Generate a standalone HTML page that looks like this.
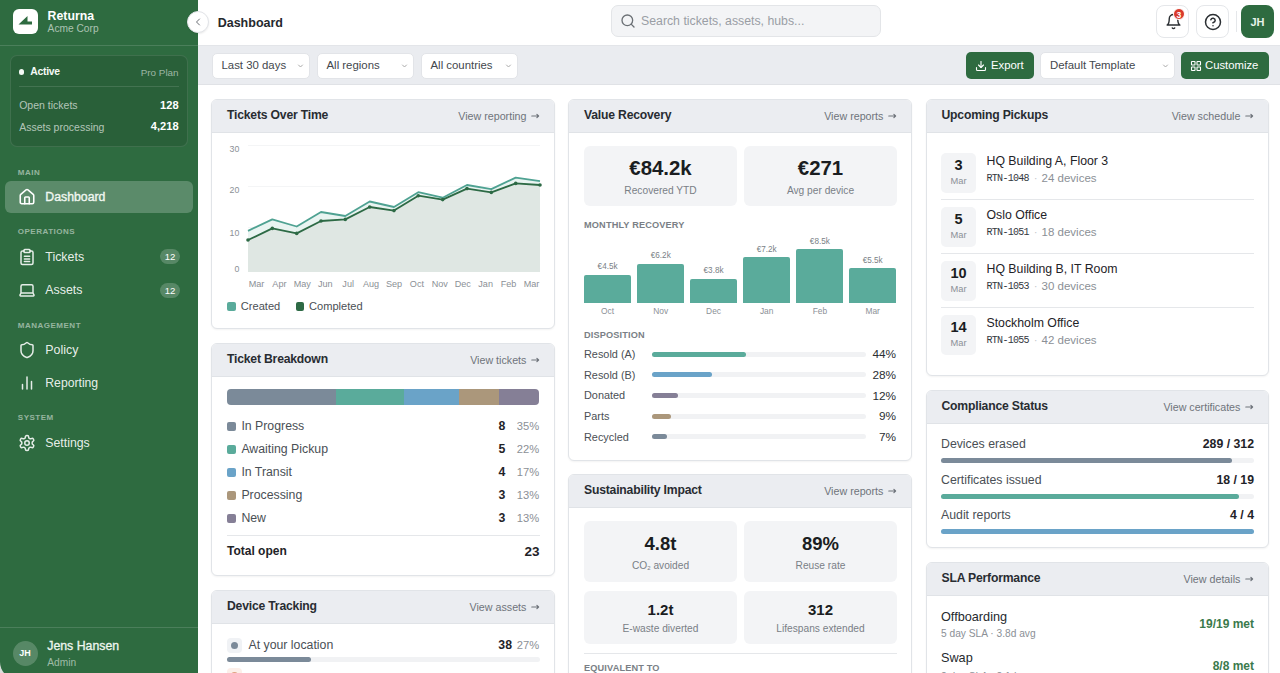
<!DOCTYPE html>
<html><head><meta charset="utf-8"><title>Dashboard</title>
<style>
html,body{margin:0;padding:0;}
body{width:1280px;height:673px;overflow:hidden;position:relative;background:#fff;font-family:"Liberation Sans",sans-serif;}
.t{position:absolute;white-space:nowrap;line-height:normal;}
.r{position:absolute;box-sizing:border-box;}
svg{position:absolute;overflow:visible;}
</style></head><body>
<div class="r" style="left:0px;top:640px;width:40px;height:33px;background:#dcdedc;"></div>
<div class="r" style="left:0px;top:0px;width:198px;height:679px;background:#2e6b40;border-bottom-left-radius:17px;"></div>
<div class="r" style="left:13px;top:9px;width:25px;height:25px;background:#fff;border-radius:6px;"></div>
<svg style="left:13px;top:9px" width="25" height="25" viewBox="0 0 25 25"><path d="M5.5 15.5 L14.5 7 L14.5 12.5 L19 12.5 L19 15.5 Z" fill="#2e6b40"/></svg>
<div class="t" style="top:8.57px;font-size:12.3px;font-weight:700;color:#fff;font-family:'Liberation Sans', sans-serif;left:47.6px;">Returna</div>
<div class="t" style="top:23.07px;font-size:10.2px;font-weight:400;color:rgba(255,255,255,0.6);font-family:'Liberation Sans', sans-serif;left:47.6px;">Acme Corp</div>
<div class="r" style="left:0px;top:45px;width:198px;height:1px;background:rgba(255,255,255,0.14);"></div>
<div class="r" style="left:10px;top:55px;width:178px;height:92px;background:rgba(0,0,0,0.1);border:1px solid rgba(255,255,255,0.1);border-radius:7px;"></div>
<div class="r" style="left:19px;top:69.2px;width:5.4px;height:5.4px;background:#f4faf5;border-radius:50%;"></div>
<div class="t" style="top:66.19px;font-size:10.4px;font-weight:700;color:#f4faf5;font-family:'Liberation Sans', sans-serif;letter-spacing:-0.25px;left:30.2px;">Active</div>
<div class="t" style="top:66.84px;font-size:9.9px;font-weight:400;color:rgba(255,255,255,0.55);font-family:'Liberation Sans', sans-serif;right:1101.4px;">Pro Plan</div>
<div class="r" style="left:19px;top:86px;width:160px;height:1px;background:rgba(255,255,255,0.12);"></div>
<div class="t" style="top:99.10px;font-size:10.5px;font-weight:400;color:rgba(255,255,255,0.65);font-family:'Liberation Sans', sans-serif;left:19.2px;">Open tickets</div>
<div class="t" style="top:98.55px;font-size:11.1px;font-weight:700;color:#fff;font-family:'Liberation Sans', sans-serif;right:1101.4px;">128</div>
<div class="t" style="top:120.50px;font-size:10.5px;font-weight:400;color:rgba(255,255,255,0.65);font-family:'Liberation Sans', sans-serif;left:19.2px;">Assets processing</div>
<div class="t" style="top:119.95px;font-size:11.1px;font-weight:700;color:#fff;font-family:'Liberation Sans', sans-serif;right:1101.4px;">4,218</div>
<div class="t" style="top:167.76px;font-size:8px;font-weight:700;color:rgba(255,255,255,0.5);font-family:'Liberation Sans', sans-serif;letter-spacing:0.5px;left:17.8px;">MAIN</div>
<div class="r" style="left:5px;top:181px;width:187.5px;height:32px;background:rgba(255,255,255,0.22);border-radius:6px;"></div>
<div class="t" style="top:190.07px;font-size:12.3px;font-weight:400;color:#f0f7f1;font-family:'Liberation Sans', sans-serif;left:45.3px;-webkit-text-stroke:0.35px #f0f7f1;">Dashboard</div>
<div class="t" style="top:226.76px;font-size:8px;font-weight:700;color:rgba(255,255,255,0.5);font-family:'Liberation Sans', sans-serif;letter-spacing:0.5px;left:17.8px;">OPERATIONS</div>
<div class="t" style="top:250.18px;font-size:12.4px;font-weight:400;color:rgba(255,255,255,0.9);font-family:'Liberation Sans', sans-serif;left:45.3px;">Tickets</div>
<div class="r" style="left:160px;top:249px;width:20px;height:15px;background:rgba(255,255,255,0.2);border-radius:7.5px;"></div>
<div class="t" style="top:251.21px;font-size:9.6px;font-weight:400;color:#fff;font-family:'Liberation Sans', sans-serif;left:-130px;width:600px;text-align:center;">12</div>
<div class="t" style="top:283.18px;font-size:12.4px;font-weight:400;color:rgba(255,255,255,0.9);font-family:'Liberation Sans', sans-serif;left:45.3px;">Assets</div>
<div class="r" style="left:160px;top:283px;width:20px;height:15px;background:rgba(255,255,255,0.2);border-radius:7.5px;"></div>
<div class="t" style="top:285.21px;font-size:9.6px;font-weight:400;color:#fff;font-family:'Liberation Sans', sans-serif;left:-130px;width:600px;text-align:center;">12</div>
<div class="t" style="top:320.56px;font-size:8px;font-weight:700;color:rgba(255,255,255,0.5);font-family:'Liberation Sans', sans-serif;letter-spacing:0.5px;left:17.8px;">MANAGEMENT</div>
<div class="t" style="top:342.98px;font-size:12.4px;font-weight:400;color:rgba(255,255,255,0.9);font-family:'Liberation Sans', sans-serif;left:45.3px;">Policy</div>
<div class="t" style="top:375.96px;font-size:12.2px;font-weight:400;color:rgba(255,255,255,0.9);font-family:'Liberation Sans', sans-serif;left:45.3px;">Reporting</div>
<div class="t" style="top:413.06px;font-size:8px;font-weight:700;color:rgba(255,255,255,0.5);font-family:'Liberation Sans', sans-serif;letter-spacing:0.5px;left:17.8px;">SYSTEM</div>
<div class="t" style="top:436.07px;font-size:12.3px;font-weight:400;color:rgba(255,255,255,0.9);font-family:'Liberation Sans', sans-serif;left:45.3px;">Settings</div>
<svg style="left:18px;top:188px" width="18" height="18" viewBox="0 0 24 24" fill="none" stroke="#fff" stroke-width="2.1" stroke-linecap="round" stroke-linejoin="round"><path d="M15 21v-8a1 1 0 0 0-1-1h-4a1 1 0 0 0-1 1v8"/><path d="M3 10a2 2 0 0 1 .709-1.528l7-5.999a2 2 0 0 1 2.582 0l7 5.999A2 2 0 0 1 21 10v9a2 2 0 0 1-2 2H5a2 2 0 0 1-2-2z"/></svg>
<svg style="left:18px;top:248px" width="18" height="18" viewBox="0 0 24 24" fill="none" stroke="rgba(255,255,255,0.88)" stroke-width="2" stroke-linecap="round" stroke-linejoin="round"><rect x="8" y="2" width="8" height="4" rx="1"/><path d="M16 4h2a2 2 0 0 1 2 2v14a2 2 0 0 1-2 2H6a2 2 0 0 1-2-2V6a2 2 0 0 1 2-2h2"/><path d="M8.5 11h7M8.5 14.5h7M8.5 18h7"/></svg>
<svg style="left:18px;top:281px" width="18" height="18" viewBox="0 0 24 24" fill="none" stroke="rgba(255,255,255,0.88)" stroke-width="2" stroke-linecap="round" stroke-linejoin="round"><path d="M20 16V7a2 2 0 0 0-2-2H6a2 2 0 0 0-2 2v9m16 0H4m16 0 1.28 2.55a1 1 0 0 1-.9 1.45H3.62a1 1 0 0 1-.9-1.45L4 16"/></svg>
<svg style="left:18px;top:341px" width="18" height="18" viewBox="0 0 24 24" fill="none" stroke="rgba(255,255,255,0.88)" stroke-width="2" stroke-linecap="round" stroke-linejoin="round"><path d="M20 13c0 5-3.5 7.5-7.66 8.95a1 1 0 0 1-.67-.01C7.5 20.5 4 18 4 13V6a1 1 0 0 1 1-1c2 0 4.5-1.2 6.24-2.72a1.17 1.17 0 0 1 1.52 0C14.51 3.81 17 5 19 5a1 1 0 0 1 1 1z"/></svg>
<svg style="left:18px;top:374px" width="18" height="18" viewBox="0 0 24 24" fill="none" stroke="rgba(255,255,255,0.88)" stroke-width="2" stroke-linecap="round" stroke-linejoin="round"><path d="M18 20V10M12 20V4M6 20v-6"/></svg>
<svg style="left:18px;top:434px" width="18" height="18" viewBox="0 0 24 24" fill="none" stroke="rgba(255,255,255,0.88)" stroke-width="2" stroke-linecap="round" stroke-linejoin="round"><path d="M12.22 2h-.44a2 2 0 0 0-2 2v.18a2 2 0 0 1-1 1.73l-.43.25a2 2 0 0 1-2 0l-.15-.08a2 2 0 0 0-2.73.73l-.22.38a2 2 0 0 0 .73 2.73l.15.1a2 2 0 0 1 1 1.72v.51a2 2 0 0 1-1 1.74l-.15.09a2 2 0 0 0-.73 2.73l.22.38a2 2 0 0 0 2.73.73l.15-.08a2 2 0 0 1 2 0l.43.25a2 2 0 0 1 1 1.73V20a2 2 0 0 0 2 2h.44a2 2 0 0 0 2-2v-.18a2 2 0 0 1 1-1.73l.43-.25a2 2 0 0 1 2 0l.15.08a2 2 0 0 0 2.73-.73l.22-.39a2 2 0 0 0-.73-2.73l-.15-.08a2 2 0 0 1-1-1.74v-.5a2 2 0 0 1 1-1.74l.15-.09a2 2 0 0 0 .73-2.73l-.22-.38a2 2 0 0 0-2.73-.73l-.15.08a2 2 0 0 1-2 0l-.43-.25a2 2 0 0 1-1-1.73V4a2 2 0 0 0-2-2z"/><circle cx="12" cy="12" r="3"/></svg>
<div class="r" style="left:0px;top:627px;width:198px;height:1px;background:rgba(255,255,255,0.14);"></div>
<div class="r" style="left:12.5px;top:640.5px;width:25px;height:25px;background:rgba(255,255,255,0.2);border-radius:50%;"></div>
<div class="t" style="top:648.36px;font-size:9px;font-weight:700;color:#fff;font-family:'Liberation Sans', sans-serif;left:-275px;width:600px;text-align:center;">JH</div>
<div class="t" style="top:638.77px;font-size:12.3px;font-weight:400;color:#eef6ef;font-family:'Liberation Sans', sans-serif;left:47.3px;-webkit-text-stroke:0.3px #eef6ef;">Jens Hansen</div>
<div class="t" style="top:657.27px;font-size:10.2px;font-weight:400;color:rgba(255,255,255,0.55);font-family:'Liberation Sans', sans-serif;left:47.3px;">Admin</div>
<div class="r" style="left:198px;top:45px;width:1082px;height:1px;background:#e3e5e9;"></div>
<div class="t" style="top:15.59px;font-size:12.5px;font-weight:700;color:#25292e;font-family:'Liberation Sans', sans-serif;left:217.7px;">Dashboard</div>
<div class="r" style="left:187px;top:10.5px;width:22px;height:22px;background:#fff;border:1px solid #e2e4e8;border-radius:50%;box-shadow:0 1px 2px rgba(0,0,0,0.08);"></div>
<svg style="left:192px;top:15.5px" width="12" height="12" viewBox="0 0 24 24" fill="none" stroke="#6a6e74" stroke-width="2" stroke-linecap="round" stroke-linejoin="round"><path d="m15 18-6-6 6-6"/></svg>
<div class="r" style="left:611px;top:5px;width:270px;height:32px;background:#f3f4f6;border:1px solid #e3e5e8;border-radius:7px;"></div>
<svg style="left:619.5px;top:13px" width="16" height="16" viewBox="0 0 24 24" fill="none" stroke="#6b7075" stroke-width="2" stroke-linecap="round" stroke-linejoin="round"><circle cx="11" cy="11" r="8"/><path d="m21 21-4.3-4.3"/></svg>
<div class="t" style="top:14.37px;font-size:12.3px;font-weight:400;color:#9a9ea5;font-family:'Liberation Sans', sans-serif;left:641px;">Search tickets, assets, hubs...</div>
<div class="r" style="left:1156px;top:5px;width:33px;height:33px;background:#fff;border:1px solid #e5e7ea;border-radius:8px;"></div>
<svg style="left:1164.5px;top:13px" width="17" height="17" viewBox="0 0 24 24" fill="none" stroke="#2b2f33" stroke-width="2" stroke-linecap="round" stroke-linejoin="round"><path d="M6 8a6 6 0 0 1 12 0c0 7 3 9 3 9H3s3-2 3-9"/><path d="M10.3 21a1.94 1.94 0 0 0 3.4 0"/></svg>
<div class="r" style="left:1172.8px;top:8.2px;width:12px;height:12px;background:#d93a2b;border-radius:50%;border:1px solid #fff;"></div>
<div class="t" style="top:9.81px;font-size:8.5px;font-weight:700;color:#fff;font-family:'Liberation Sans', sans-serif;left:878.8px;width:600px;text-align:center;">3</div>
<div class="r" style="left:1196px;top:5px;width:33px;height:33px;background:#fff;border:1px solid #e5e7ea;border-radius:8px;"></div>
<svg style="left:1203.5px;top:12.5px" width="18" height="18" viewBox="0 0 24 24" fill="none" stroke="#2b2f33" stroke-width="2" stroke-linecap="round" stroke-linejoin="round"><circle cx="12" cy="12" r="10"/><path d="M9.09 9a3 3 0 0 1 5.83 1c0 2-3 3-3 3"/><path d="M12 17h.01"/></svg>
<div class="r" style="left:1235.5px;top:11px;width:1px;height:21px;background:#e5e7ea;"></div>
<div class="r" style="left:1241px;top:5px;width:33px;height:33px;background:#2e6b40;border-radius:8px;"></div>
<div class="t" style="top:15.54px;font-size:11px;font-weight:700;color:#e8f3ea;font-family:'Liberation Sans', sans-serif;left:957.5px;width:600px;text-align:center;">JH</div>
<div class="r" style="left:198px;top:46px;width:1082px;height:39px;background:#eaecf0;border-bottom:1px solid #e0e2e6;"></div>
<div class="r" style="left:212px;top:53px;width:98px;height:26px;background:#fff;border:1px solid #e2e4e8;border-radius:5px;"></div>
<div class="t" style="top:59.48px;font-size:11.4px;font-weight:400;color:#43474d;font-family:'Liberation Sans', sans-serif;left:221.5px;">Last 30 days</div>
<svg style="left:297px;top:63px" width="7" height="6" viewBox="0 0 7 6" fill="none" stroke="#aaa" stroke-width="1" stroke-linecap="round"><path d="M1.5 2L3.5 4L5.5 2"/></svg>
<div class="r" style="left:317px;top:53px;width:97px;height:26px;background:#fff;border:1px solid #e2e4e8;border-radius:5px;"></div>
<div class="t" style="top:59.48px;font-size:11.4px;font-weight:400;color:#43474d;font-family:'Liberation Sans', sans-serif;left:326.5px;">All regions</div>
<svg style="left:401px;top:63px" width="7" height="6" viewBox="0 0 7 6" fill="none" stroke="#aaa" stroke-width="1" stroke-linecap="round"><path d="M1.5 2L3.5 4L5.5 2"/></svg>
<div class="r" style="left:421px;top:53px;width:97px;height:26px;background:#fff;border:1px solid #e2e4e8;border-radius:5px;"></div>
<div class="t" style="top:59.48px;font-size:11.4px;font-weight:400;color:#43474d;font-family:'Liberation Sans', sans-serif;left:430.5px;">All countries</div>
<svg style="left:505px;top:63px" width="7" height="6" viewBox="0 0 7 6" fill="none" stroke="#aaa" stroke-width="1" stroke-linecap="round"><path d="M1.5 2L3.5 4L5.5 2"/></svg>
<div class="r" style="left:966px;top:52px;width:68px;height:27px;background:#2e6b40;border-radius:5px;"></div>
<svg style="left:975px;top:59.5px" width="12" height="12" viewBox="0 0 24 24" fill="none" stroke="#fff" stroke-width="2.2" stroke-linecap="round" stroke-linejoin="round"><path d="M21 15v4a2 2 0 0 1-2 2H5a2 2 0 0 1-2-2v-4"/><path d="m7 10 5 5 5-5"/><path d="M12 15V3"/></svg>
<div class="t" style="top:59.37px;font-size:11.3px;font-weight:400;color:#fff;font-family:'Liberation Sans', sans-serif;left:991px;">Export</div>
<div class="r" style="left:1040px;top:52px;width:135px;height:27px;background:#fff;border:1px solid #e2e4e8;border-radius:5px;"></div>
<div class="t" style="top:59.28px;font-size:11.4px;font-weight:400;color:#43474d;font-family:'Liberation Sans', sans-serif;left:1050px;">Default Template</div>
<svg style="left:1162px;top:63px" width="7" height="6" viewBox="0 0 7 6" fill="none" stroke="#aaa" stroke-width="1" stroke-linecap="round"><path d="M1.5 2L3.5 4L5.5 2"/></svg>
<div class="r" style="left:1181px;top:52px;width:88px;height:27px;background:#2e6b40;border-radius:5px;"></div>
<svg style="left:1190px;top:59.5px" width="12" height="12" viewBox="0 0 24 24" fill="none" stroke="#fff" stroke-width="2.2" stroke-linecap="round" stroke-linejoin="round"><rect width="7" height="7" x="3" y="3" rx="1"/><rect width="7" height="7" x="14" y="3" rx="1"/><rect width="7" height="7" x="14" y="14" rx="1"/><rect width="7" height="7" x="3" y="14" rx="1"/></svg>
<div class="t" style="top:59.37px;font-size:11.3px;font-weight:400;color:#fff;font-family:'Liberation Sans', sans-serif;left:1205px;">Customize</div>
<div class="r" style="left:211px;top:99px;width:344px;height:230px;background:#fff;border:1px solid #e1e4e8;border-radius:6px;box-shadow:0 1px 2px rgba(0,0,0,0.05);overflow:hidden;"></div>
<div class="r" style="left:212px;top:100px;width:342px;height:33px;background:#ebedf1;border-bottom:1px solid #e0e3e7;border-radius:5px 5px 0 0;"></div>
<div class="t" style="top:108.36px;font-size:12.2px;font-weight:700;color:#282c31;font-family:'Liberation Sans', sans-serif;letter-spacing:-0.2px;left:227px;">Tickets Over Time</div>
<div class="t" style="top:109.82px;font-size:10.7px;font-weight:400;color:#6f747b;font-family:'Liberation Sans', sans-serif;right:753.6px;">View reporting</div>
<svg style="left:531px;top:112.5px" width="9" height="6" viewBox="0 0 9 6" fill="none" stroke="#6f747b" stroke-width="1.2" stroke-linecap="round" stroke-linejoin="round"><path d="M0.8 3H7.6M5.9 1.3L7.6 3L5.9 4.7"/></svg>
<div class="r" style="left:211px;top:343px;width:344px;height:233px;background:#fff;border:1px solid #e1e4e8;border-radius:6px;box-shadow:0 1px 2px rgba(0,0,0,0.05);overflow:hidden;"></div>
<div class="r" style="left:212px;top:344px;width:342px;height:33px;background:#ebedf1;border-bottom:1px solid #e0e3e7;border-radius:5px 5px 0 0;"></div>
<div class="t" style="top:352.36px;font-size:12.2px;font-weight:700;color:#282c31;font-family:'Liberation Sans', sans-serif;letter-spacing:-0.2px;left:227px;">Ticket Breakdown</div>
<div class="t" style="top:353.82px;font-size:10.7px;font-weight:400;color:#6f747b;font-family:'Liberation Sans', sans-serif;right:753.6px;">View tickets</div>
<svg style="left:531px;top:356.5px" width="9" height="6" viewBox="0 0 9 6" fill="none" stroke="#6f747b" stroke-width="1.2" stroke-linecap="round" stroke-linejoin="round"><path d="M0.8 3H7.6M5.9 1.3L7.6 3L5.9 4.7"/></svg>
<div class="r" style="left:211px;top:590px;width:344px;height:110px;background:#fff;border:1px solid #e1e4e8;border-radius:6px;box-shadow:0 1px 2px rgba(0,0,0,0.05);overflow:hidden;"></div>
<div class="r" style="left:212px;top:591px;width:342px;height:33px;background:#ebedf1;border-bottom:1px solid #e0e3e7;border-radius:5px 5px 0 0;"></div>
<div class="t" style="top:599.36px;font-size:12.2px;font-weight:700;color:#282c31;font-family:'Liberation Sans', sans-serif;letter-spacing:-0.2px;left:227px;">Device Tracking</div>
<div class="t" style="top:600.82px;font-size:10.7px;font-weight:400;color:#6f747b;font-family:'Liberation Sans', sans-serif;right:753.6px;">View assets</div>
<svg style="left:531px;top:603.5px" width="9" height="6" viewBox="0 0 9 6" fill="none" stroke="#6f747b" stroke-width="1.2" stroke-linecap="round" stroke-linejoin="round"><path d="M0.8 3H7.6M5.9 1.3L7.6 3L5.9 4.7"/></svg>
<div class="r" style="left:568px;top:99px;width:344px;height:362px;background:#fff;border:1px solid #e1e4e8;border-radius:6px;box-shadow:0 1px 2px rgba(0,0,0,0.05);overflow:hidden;"></div>
<div class="r" style="left:569px;top:100px;width:342px;height:33px;background:#ebedf1;border-bottom:1px solid #e0e3e7;border-radius:5px 5px 0 0;"></div>
<div class="t" style="top:108.36px;font-size:12.2px;font-weight:700;color:#282c31;font-family:'Liberation Sans', sans-serif;letter-spacing:-0.2px;left:584px;">Value Recovery</div>
<div class="t" style="top:109.82px;font-size:10.7px;font-weight:400;color:#6f747b;font-family:'Liberation Sans', sans-serif;right:396.6px;">View reports</div>
<svg style="left:888px;top:112.5px" width="9" height="6" viewBox="0 0 9 6" fill="none" stroke="#6f747b" stroke-width="1.2" stroke-linecap="round" stroke-linejoin="round"><path d="M0.8 3H7.6M5.9 1.3L7.6 3L5.9 4.7"/></svg>
<div class="r" style="left:568px;top:474px;width:344px;height:226px;background:#fff;border:1px solid #e1e4e8;border-radius:6px;box-shadow:0 1px 2px rgba(0,0,0,0.05);overflow:hidden;"></div>
<div class="r" style="left:569px;top:475px;width:342px;height:33px;background:#ebedf1;border-bottom:1px solid #e0e3e7;border-radius:5px 5px 0 0;"></div>
<div class="t" style="top:483.36px;font-size:12.2px;font-weight:700;color:#282c31;font-family:'Liberation Sans', sans-serif;letter-spacing:-0.2px;left:584px;">Sustainability Impact</div>
<div class="t" style="top:484.82px;font-size:10.7px;font-weight:400;color:#6f747b;font-family:'Liberation Sans', sans-serif;right:396.6px;">View reports</div>
<svg style="left:888px;top:487.5px" width="9" height="6" viewBox="0 0 9 6" fill="none" stroke="#6f747b" stroke-width="1.2" stroke-linecap="round" stroke-linejoin="round"><path d="M0.8 3H7.6M5.9 1.3L7.6 3L5.9 4.7"/></svg>
<div class="r" style="left:925.5px;top:99px;width:343.5px;height:277px;background:#fff;border:1px solid #e1e4e8;border-radius:6px;box-shadow:0 1px 2px rgba(0,0,0,0.05);overflow:hidden;"></div>
<div class="r" style="left:926.5px;top:100px;width:341.5px;height:33px;background:#ebedf1;border-bottom:1px solid #e0e3e7;border-radius:5px 5px 0 0;"></div>
<div class="t" style="top:108.36px;font-size:12.2px;font-weight:700;color:#282c31;font-family:'Liberation Sans', sans-serif;letter-spacing:-0.2px;left:941.5px;">Upcoming Pickups</div>
<div class="t" style="top:109.82px;font-size:10.7px;font-weight:400;color:#6f747b;font-family:'Liberation Sans', sans-serif;right:39.59999999999991px;">View schedule</div>
<svg style="left:1245.0px;top:112.5px" width="9" height="6" viewBox="0 0 9 6" fill="none" stroke="#6f747b" stroke-width="1.2" stroke-linecap="round" stroke-linejoin="round"><path d="M0.8 3H7.6M5.9 1.3L7.6 3L5.9 4.7"/></svg>
<div class="r" style="left:925.5px;top:390px;width:343.5px;height:158px;background:#fff;border:1px solid #e1e4e8;border-radius:6px;box-shadow:0 1px 2px rgba(0,0,0,0.05);overflow:hidden;"></div>
<div class="r" style="left:926.5px;top:391px;width:341.5px;height:33px;background:#ebedf1;border-bottom:1px solid #e0e3e7;border-radius:5px 5px 0 0;"></div>
<div class="t" style="top:399.36px;font-size:12.2px;font-weight:700;color:#282c31;font-family:'Liberation Sans', sans-serif;letter-spacing:-0.2px;left:941.5px;">Compliance Status</div>
<div class="t" style="top:400.82px;font-size:10.7px;font-weight:400;color:#6f747b;font-family:'Liberation Sans', sans-serif;right:39.59999999999991px;">View certificates</div>
<svg style="left:1245.0px;top:403.5px" width="9" height="6" viewBox="0 0 9 6" fill="none" stroke="#6f747b" stroke-width="1.2" stroke-linecap="round" stroke-linejoin="round"><path d="M0.8 3H7.6M5.9 1.3L7.6 3L5.9 4.7"/></svg>
<div class="r" style="left:925.5px;top:562px;width:343.5px;height:138px;background:#fff;border:1px solid #e1e4e8;border-radius:6px;box-shadow:0 1px 2px rgba(0,0,0,0.05);overflow:hidden;"></div>
<div class="r" style="left:926.5px;top:563px;width:341.5px;height:33px;background:#ebedf1;border-bottom:1px solid #e0e3e7;border-radius:5px 5px 0 0;"></div>
<div class="t" style="top:571.36px;font-size:12.2px;font-weight:700;color:#282c31;font-family:'Liberation Sans', sans-serif;letter-spacing:-0.2px;left:941.5px;">SLA Performance</div>
<div class="t" style="top:572.82px;font-size:10.7px;font-weight:400;color:#6f747b;font-family:'Liberation Sans', sans-serif;right:39.59999999999991px;">View details</div>
<svg style="left:1245.0px;top:575.5px" width="9" height="6" viewBox="0 0 9 6" fill="none" stroke="#6f747b" stroke-width="1.2" stroke-linecap="round" stroke-linejoin="round"><path d="M0.8 3H7.6M5.9 1.3L7.6 3L5.9 4.7"/></svg>
<div class="r" style="left:248px;top:145.4px;width:292px;height:1px;background:#f4f5f6;"></div>
<div class="r" style="left:248px;top:186.3px;width:292px;height:1px;background:#f4f5f6;"></div>
<div class="r" style="left:248px;top:227.2px;width:292px;height:1px;background:#f4f5f6;"></div>
<div class="t" style="top:143.64px;font-size:8.8px;font-weight:400;color:#8b9096;font-family:'Liberation Sans', sans-serif;right:1040.7px;">30</div>
<div class="t" style="top:185.44px;font-size:8.8px;font-weight:400;color:#8b9096;font-family:'Liberation Sans', sans-serif;right:1040.7px;">20</div>
<div class="t" style="top:227.84px;font-size:8.8px;font-weight:400;color:#8b9096;font-family:'Liberation Sans', sans-serif;right:1040.7px;">10</div>
<div class="t" style="top:264.24px;font-size:8.8px;font-weight:400;color:#8b9096;font-family:'Liberation Sans', sans-serif;right:1040.7px;">0</div>
<svg style="left:248px;top:140px" width="292" height="132" viewBox="0 0 292 132"><polygon points="0,132 0.0,90.9 24.3,79.4 48.7,86.5 73.0,72.0 97.3,76.0 121.7,61.5 146.0,67.0 170.3,52.2 194.7,57.7 219.0,45.0 243.3,49.1 267.7,37.6 292.0,41.2 292,132" fill="#e9f4f1"/><polygon points="0,132 0.0,100.0 24.3,88.4 48.7,93.4 73.0,81.0 97.3,79.4 121.7,67.0 146.0,70.6 170.3,55.7 194.7,59.6 219.0,48.6 243.3,52.4 267.7,43.4 292.0,45.0 292,132" fill="#dfe7e3"/><polyline points="0.0,90.9 24.3,79.4 48.7,86.5 73.0,72.0 97.3,76.0 121.7,61.5 146.0,67.0 170.3,52.2 194.7,57.7 219.0,45.0 243.3,49.1 267.7,37.6 292.0,41.2" fill="none" stroke="#4fa292" stroke-width="1.8" stroke-linejoin="round"/><polyline points="0.0,100.0 24.3,88.4 48.7,93.4 73.0,81.0 97.3,79.4 121.7,67.0 146.0,70.6 170.3,55.7 194.7,59.6 219.0,48.6 243.3,52.4 267.7,43.4 292.0,45.0" fill="none" stroke="#2d6a45" stroke-width="1.8" stroke-linejoin="round"/><circle cx="0.0" cy="100.0" r="1.8" fill="#2d6a45"/><circle cx="24.3" cy="88.4" r="1.8" fill="#2d6a45"/><circle cx="48.7" cy="93.4" r="1.8" fill="#2d6a45"/><circle cx="73.0" cy="81.0" r="1.8" fill="#2d6a45"/><circle cx="97.3" cy="79.4" r="1.8" fill="#2d6a45"/><circle cx="121.7" cy="67.0" r="1.8" fill="#2d6a45"/><circle cx="146.0" cy="70.6" r="1.8" fill="#2d6a45"/><circle cx="170.3" cy="55.7" r="1.8" fill="#2d6a45"/><circle cx="194.7" cy="59.6" r="1.8" fill="#2d6a45"/><circle cx="219.0" cy="48.6" r="1.8" fill="#2d6a45"/><circle cx="243.3" cy="52.4" r="1.8" fill="#2d6a45"/><circle cx="267.7" cy="43.4" r="1.8" fill="#2d6a45"/><circle cx="292.0" cy="45.0" r="1.8" fill="#2d6a45"/></svg>
<div class="t" style="top:278.76px;font-size:9.1px;font-weight:400;color:#8b9096;font-family:'Liberation Sans', sans-serif;left:-43.5px;width:600px;text-align:center;">Mar</div>
<div class="t" style="top:278.76px;font-size:9.1px;font-weight:400;color:#8b9096;font-family:'Liberation Sans', sans-serif;left:-20.583333333333314px;width:600px;text-align:center;">Apr</div>
<div class="t" style="top:278.76px;font-size:9.1px;font-weight:400;color:#8b9096;font-family:'Liberation Sans', sans-serif;left:2.3333333333333144px;width:600px;text-align:center;">May</div>
<div class="t" style="top:278.76px;font-size:9.1px;font-weight:400;color:#8b9096;font-family:'Liberation Sans', sans-serif;left:25.25px;width:600px;text-align:center;">Jun</div>
<div class="t" style="top:278.76px;font-size:9.1px;font-weight:400;color:#8b9096;font-family:'Liberation Sans', sans-serif;left:48.166666666666686px;width:600px;text-align:center;">Jul</div>
<div class="t" style="top:278.76px;font-size:9.1px;font-weight:400;color:#8b9096;font-family:'Liberation Sans', sans-serif;left:71.08333333333331px;width:600px;text-align:center;">Aug</div>
<div class="t" style="top:278.76px;font-size:9.1px;font-weight:400;color:#8b9096;font-family:'Liberation Sans', sans-serif;left:94.0px;width:600px;text-align:center;">Sep</div>
<div class="t" style="top:278.76px;font-size:9.1px;font-weight:400;color:#8b9096;font-family:'Liberation Sans', sans-serif;left:116.91666666666663px;width:600px;text-align:center;">Oct</div>
<div class="t" style="top:278.76px;font-size:9.1px;font-weight:400;color:#8b9096;font-family:'Liberation Sans', sans-serif;left:139.83333333333337px;width:600px;text-align:center;">Nov</div>
<div class="t" style="top:278.76px;font-size:9.1px;font-weight:400;color:#8b9096;font-family:'Liberation Sans', sans-serif;left:162.75px;width:600px;text-align:center;">Dec</div>
<div class="t" style="top:278.76px;font-size:9.1px;font-weight:400;color:#8b9096;font-family:'Liberation Sans', sans-serif;left:185.66666666666663px;width:600px;text-align:center;">Jan</div>
<div class="t" style="top:278.76px;font-size:9.1px;font-weight:400;color:#8b9096;font-family:'Liberation Sans', sans-serif;left:208.58333333333337px;width:600px;text-align:center;">Feb</div>
<div class="t" style="top:278.76px;font-size:9.1px;font-weight:400;color:#8b9096;font-family:'Liberation Sans', sans-serif;left:231.5px;width:600px;text-align:center;">Mar</div>
<div class="r" style="left:227px;top:302px;width:8.5px;height:8.5px;background:#5aab9b;border-radius:2px;"></div>
<div class="t" style="top:299.55px;font-size:11.1px;font-weight:400;color:#4a4f55;font-family:'Liberation Sans', sans-serif;left:240.8px;">Created</div>
<div class="r" style="left:295.5px;top:302px;width:8.5px;height:8.5px;background:#2d6a45;border-radius:2px;"></div>
<div class="t" style="top:299.55px;font-size:11.1px;font-weight:400;color:#4a4f55;font-family:'Liberation Sans', sans-serif;left:309px;">Completed</div>
<div class="r" style="left:227px;top:389px;width:312.2px;height:15.5px;border-radius:4px;overflow:hidden;"><div style="position:absolute;left:0px;width:108.89999999999998px;top:0;height:15.5px;background:#7b8a99"></div><div style="position:absolute;left:108.89999999999998px;width:68.20000000000005px;top:0;height:15.5px;background:#5aab9b"></div><div style="position:absolute;left:177.10000000000002px;width:55.0px;top:0;height:15.5px;background:#6aa3c8"></div><div style="position:absolute;left:232.10000000000002px;width:39.5px;top:0;height:15.5px;background:#ab977b"></div><div style="position:absolute;left:271.6px;width:40.60000000000002px;top:0;height:15.5px;background:#857f96"></div></div>
<div class="r" style="left:227px;top:421.8px;width:9px;height:9px;background:#7b8a99;border-radius:2px;"></div>
<div class="t" style="top:419.17px;font-size:12.3px;font-weight:400;color:#4a4f55;font-family:'Liberation Sans', sans-serif;left:241.4px;">In Progress</div>
<div class="t" style="top:419.17px;font-size:12.3px;font-weight:700;color:#1f2328;font-family:'Liberation Sans', sans-serif;right:774.6px;">8</div>
<div class="t" style="top:420.16px;font-size:11.2px;font-weight:400;color:#8b9096;font-family:'Liberation Sans', sans-serif;right:740.8px;">35%</div>
<div class="r" style="left:227px;top:444.75px;width:9px;height:9px;background:#5aab9b;border-radius:2px;"></div>
<div class="t" style="top:442.12px;font-size:12.3px;font-weight:400;color:#4a4f55;font-family:'Liberation Sans', sans-serif;left:241.4px;">Awaiting Pickup</div>
<div class="t" style="top:442.12px;font-size:12.3px;font-weight:700;color:#1f2328;font-family:'Liberation Sans', sans-serif;right:774.6px;">5</div>
<div class="t" style="top:443.11px;font-size:11.2px;font-weight:400;color:#8b9096;font-family:'Liberation Sans', sans-serif;right:740.8px;">22%</div>
<div class="r" style="left:227px;top:467.7px;width:9px;height:9px;background:#6aa3c8;border-radius:2px;"></div>
<div class="t" style="top:465.07px;font-size:12.3px;font-weight:400;color:#4a4f55;font-family:'Liberation Sans', sans-serif;left:241.4px;">In Transit</div>
<div class="t" style="top:465.07px;font-size:12.3px;font-weight:700;color:#1f2328;font-family:'Liberation Sans', sans-serif;right:774.6px;">4</div>
<div class="t" style="top:466.06px;font-size:11.2px;font-weight:400;color:#8b9096;font-family:'Liberation Sans', sans-serif;right:740.8px;">17%</div>
<div class="r" style="left:227px;top:490.65px;width:9px;height:9px;background:#ab977b;border-radius:2px;"></div>
<div class="t" style="top:488.02px;font-size:12.3px;font-weight:400;color:#4a4f55;font-family:'Liberation Sans', sans-serif;left:241.4px;">Processing</div>
<div class="t" style="top:488.02px;font-size:12.3px;font-weight:700;color:#1f2328;font-family:'Liberation Sans', sans-serif;right:774.6px;">3</div>
<div class="t" style="top:489.01px;font-size:11.2px;font-weight:400;color:#8b9096;font-family:'Liberation Sans', sans-serif;right:740.8px;">13%</div>
<div class="r" style="left:227px;top:513.6px;width:9px;height:9px;background:#857f96;border-radius:2px;"></div>
<div class="t" style="top:510.97px;font-size:12.3px;font-weight:400;color:#4a4f55;font-family:'Liberation Sans', sans-serif;left:241.4px;">New</div>
<div class="t" style="top:510.97px;font-size:12.3px;font-weight:700;color:#1f2328;font-family:'Liberation Sans', sans-serif;right:774.6px;">3</div>
<div class="t" style="top:511.96px;font-size:11.2px;font-weight:400;color:#8b9096;font-family:'Liberation Sans', sans-serif;right:740.8px;">13%</div>
<div class="r" style="left:227px;top:534.5px;width:313px;height:1px;background:#e5e7ea;"></div>
<div class="t" style="top:544.04px;font-size:12px;font-weight:700;color:#1f2328;font-family:'Liberation Sans', sans-serif;left:227px;">Total open</div>
<div class="t" style="top:544.48px;font-size:13.5px;font-weight:700;color:#1f2328;font-family:'Liberation Sans', sans-serif;right:740.5px;">23</div>
<div class="r" style="left:227px;top:637.5px;width:15px;height:15px;background:#f0f2f5;border-radius:4px;"></div>
<div class="r" style="left:231px;top:641.5px;width:7px;height:7px;background:#7b8a99;border-radius:50%;"></div>
<div class="t" style="top:637.67px;font-size:12.3px;font-weight:400;color:#4a4f55;font-family:'Liberation Sans', sans-serif;left:248.5px;">At your location</div>
<div class="t" style="top:637.67px;font-size:12.3px;font-weight:700;color:#1f2328;font-family:'Liberation Sans', sans-serif;right:768px;">38</div>
<div class="t" style="top:638.66px;font-size:11.2px;font-weight:400;color:#8b9096;font-family:'Liberation Sans', sans-serif;right:740.8px;">27%</div>
<div class="r" style="left:227px;top:657px;width:313px;height:4.5px;background:#f1f2f4;border-radius:3px;"></div>
<div class="r" style="left:227px;top:657px;width:84px;height:4.5px;background:#7b8a99;border-radius:3px;"></div>
<div class="r" style="left:227px;top:668px;width:15px;height:15px;background:#fcefe9;border-radius:4px;"></div>
<div class="r" style="left:231px;top:672px;width:7px;height:7px;background:#e0a080;border-radius:50%;"></div>
<div class="r" style="left:584px;top:146px;width:153px;height:60px;background:#f3f4f6;border-radius:6px;"></div>
<div class="t" style="top:156.74px;font-size:20.4px;font-weight:700;color:#1a1d21;font-family:'Liberation Sans', sans-serif;left:360.5px;width:600px;text-align:center;">&euro;84.2k</div>
<div class="t" style="top:185.37px;font-size:10.2px;font-weight:400;color:#7a7f86;font-family:'Liberation Sans', sans-serif;left:360.5px;width:600px;text-align:center;">Recovered YTD</div>
<div class="r" style="left:744px;top:146px;width:153px;height:60px;background:#f3f4f6;border-radius:6px;"></div>
<div class="t" style="top:156.74px;font-size:20.4px;font-weight:700;color:#1a1d21;font-family:'Liberation Sans', sans-serif;left:520.5px;width:600px;text-align:center;">&euro;271</div>
<div class="t" style="top:185.37px;font-size:10.2px;font-weight:400;color:#7a7f86;font-family:'Liberation Sans', sans-serif;left:520.5px;width:600px;text-align:center;">Avg per device</div>
<div class="t" style="top:219.57px;font-size:9.2px;font-weight:700;color:#7a7f86;font-family:'Liberation Sans', sans-serif;letter-spacing:0.15px;left:584px;">MONTHLY RECOVERY</div>
<div class="r" style="left:584px;top:274.5px;width:47.200000000000045px;height:28.5px;background:#5aab9b;border-radius:2px 2px 0 0;"></div>
<div class="t" style="top:262.08px;font-size:8.2px;font-weight:400;color:#7a7f86;font-family:'Liberation Sans', sans-serif;left:307.6px;width:600px;text-align:center;">&euro;4.5k</div>
<div class="t" style="top:306.30px;font-size:8.4px;font-weight:400;color:#8b9096;font-family:'Liberation Sans', sans-serif;left:307.6px;width:600px;text-align:center;">Oct</div>
<div class="r" style="left:637.2px;top:263.8px;width:47.09999999999991px;height:39.19999999999999px;background:#5aab9b;border-radius:2px 2px 0 0;"></div>
<div class="t" style="top:251.38px;font-size:8.2px;font-weight:400;color:#7a7f86;font-family:'Liberation Sans', sans-serif;left:360.75px;width:600px;text-align:center;">&euro;6.2k</div>
<div class="t" style="top:306.30px;font-size:8.4px;font-weight:400;color:#8b9096;font-family:'Liberation Sans', sans-serif;left:360.75px;width:600px;text-align:center;">Nov</div>
<div class="r" style="left:690px;top:278.8px;width:47.10000000000002px;height:24.19999999999999px;background:#5aab9b;border-radius:2px 2px 0 0;"></div>
<div class="t" style="top:266.38px;font-size:8.2px;font-weight:400;color:#7a7f86;font-family:'Liberation Sans', sans-serif;left:413.54999999999995px;width:600px;text-align:center;">&euro;3.8k</div>
<div class="t" style="top:306.30px;font-size:8.4px;font-weight:400;color:#8b9096;font-family:'Liberation Sans', sans-serif;left:413.54999999999995px;width:600px;text-align:center;">Dec</div>
<div class="r" style="left:743.1px;top:257.1px;width:47.19999999999993px;height:45.89999999999998px;background:#5aab9b;border-radius:2px 2px 0 0;"></div>
<div class="t" style="top:244.68px;font-size:8.2px;font-weight:400;color:#7a7f86;font-family:'Liberation Sans', sans-serif;left:466.70000000000005px;width:600px;text-align:center;">&euro;7.2k</div>
<div class="t" style="top:306.30px;font-size:8.4px;font-weight:400;color:#8b9096;font-family:'Liberation Sans', sans-serif;left:466.70000000000005px;width:600px;text-align:center;">Jan</div>
<div class="r" style="left:796.3px;top:249.1px;width:47.10000000000002px;height:53.900000000000006px;background:#5aab9b;border-radius:2px 2px 0 0;"></div>
<div class="t" style="top:236.68px;font-size:8.2px;font-weight:400;color:#7a7f86;font-family:'Liberation Sans', sans-serif;left:519.8499999999999px;width:600px;text-align:center;">&euro;8.5k</div>
<div class="t" style="top:306.30px;font-size:8.4px;font-weight:400;color:#8b9096;font-family:'Liberation Sans', sans-serif;left:519.8499999999999px;width:600px;text-align:center;">Feb</div>
<div class="r" style="left:849.1px;top:268.1px;width:47.10000000000002px;height:34.89999999999998px;background:#5aab9b;border-radius:2px 2px 0 0;"></div>
<div class="t" style="top:255.68px;font-size:8.2px;font-weight:400;color:#7a7f86;font-family:'Liberation Sans', sans-serif;left:572.6500000000001px;width:600px;text-align:center;">&euro;5.5k</div>
<div class="t" style="top:306.30px;font-size:8.4px;font-weight:400;color:#8b9096;font-family:'Liberation Sans', sans-serif;left:572.6500000000001px;width:600px;text-align:center;">Mar</div>
<div class="t" style="top:329.57px;font-size:9.2px;font-weight:700;color:#7a7f86;font-family:'Liberation Sans', sans-serif;letter-spacing:0.15px;left:584px;">DISPOSITION</div>
<div class="t" style="top:348.04px;font-size:10.9px;font-weight:400;color:#4a4f55;font-family:'Liberation Sans', sans-serif;left:584px;">Resold (A)</div>
<div class="r" style="left:652px;top:351.5px;width:214px;height:5px;background:#f1f2f4;border-radius:3px;"></div>
<div class="r" style="left:652px;top:351.5px;width:94.3px;height:5px;background:#5aab9b;border-radius:3px;"></div>
<div class="t" style="top:347.22px;font-size:11.8px;font-weight:400;color:#2b2f33;font-family:'Liberation Sans', sans-serif;right:384px;">44%</div>
<div class="t" style="top:368.72px;font-size:10.9px;font-weight:400;color:#4a4f55;font-family:'Liberation Sans', sans-serif;left:584px;">Resold (B)</div>
<div class="r" style="left:652px;top:372.18px;width:214px;height:5px;background:#f1f2f4;border-radius:3px;"></div>
<div class="r" style="left:652px;top:372.18px;width:60px;height:5px;background:#6aa3c8;border-radius:3px;"></div>
<div class="t" style="top:367.90px;font-size:11.8px;font-weight:400;color:#2b2f33;font-family:'Liberation Sans', sans-serif;right:384px;">28%</div>
<div class="t" style="top:389.40px;font-size:10.9px;font-weight:400;color:#4a4f55;font-family:'Liberation Sans', sans-serif;left:584px;">Donated</div>
<div class="r" style="left:652px;top:392.86px;width:214px;height:5px;background:#f1f2f4;border-radius:3px;"></div>
<div class="r" style="left:652px;top:392.86px;width:25.8px;height:5px;background:#857f96;border-radius:3px;"></div>
<div class="t" style="top:388.58px;font-size:11.8px;font-weight:400;color:#2b2f33;font-family:'Liberation Sans', sans-serif;right:384px;">12%</div>
<div class="t" style="top:410.08px;font-size:10.9px;font-weight:400;color:#4a4f55;font-family:'Liberation Sans', sans-serif;left:584px;">Parts</div>
<div class="r" style="left:652px;top:413.54px;width:214px;height:5px;background:#f1f2f4;border-radius:3px;"></div>
<div class="r" style="left:652px;top:413.54px;width:18.8px;height:5px;background:#ab977b;border-radius:3px;"></div>
<div class="t" style="top:409.26px;font-size:11.8px;font-weight:400;color:#2b2f33;font-family:'Liberation Sans', sans-serif;right:384px;">9%</div>
<div class="t" style="top:430.76px;font-size:10.9px;font-weight:400;color:#4a4f55;font-family:'Liberation Sans', sans-serif;left:584px;">Recycled</div>
<div class="r" style="left:652px;top:434.22px;width:214px;height:5px;background:#f1f2f4;border-radius:3px;"></div>
<div class="r" style="left:652px;top:434.22px;width:15.3px;height:5px;background:#7b8a99;border-radius:3px;"></div>
<div class="t" style="top:429.94px;font-size:11.8px;font-weight:400;color:#2b2f33;font-family:'Liberation Sans', sans-serif;right:384px;">7%</div>
<div class="r" style="left:584px;top:521px;width:153px;height:61px;background:#f3f4f6;border-radius:6px;"></div>
<div class="t" style="top:533.26px;font-size:18.5px;font-weight:700;color:#1a1d21;font-family:'Liberation Sans', sans-serif;left:360.5px;width:600px;text-align:center;">4.8t</div>
<div class="t" style="top:560.27px;font-size:10.2px;font-weight:400;color:#7a7f86;font-family:'Liberation Sans', sans-serif;left:360.5px;width:600px;text-align:center;">CO<sub style="font-size:6px;vertical-align:-1px">2</sub> avoided</div>
<div class="r" style="left:744px;top:521px;width:153px;height:61px;background:#f3f4f6;border-radius:6px;"></div>
<div class="t" style="top:533.26px;font-size:18.5px;font-weight:700;color:#1a1d21;font-family:'Liberation Sans', sans-serif;left:520.5px;width:600px;text-align:center;">89%</div>
<div class="t" style="top:560.27px;font-size:10.2px;font-weight:400;color:#7a7f86;font-family:'Liberation Sans', sans-serif;left:520.5px;width:600px;text-align:center;">Reuse rate</div>
<div class="r" style="left:584px;top:591px;width:153px;height:53px;background:#f3f4f6;border-radius:6px;"></div>
<div class="t" style="top:600.62px;font-size:15px;font-weight:700;color:#1a1d21;font-family:'Liberation Sans', sans-serif;left:360.5px;width:600px;text-align:center;">1.2t</div>
<div class="t" style="top:622.77px;font-size:10.2px;font-weight:400;color:#7a7f86;font-family:'Liberation Sans', sans-serif;left:360.5px;width:600px;text-align:center;">E-waste diverted</div>
<div class="r" style="left:744px;top:591px;width:153px;height:53px;background:#f3f4f6;border-radius:6px;"></div>
<div class="t" style="top:600.62px;font-size:15px;font-weight:700;color:#1a1d21;font-family:'Liberation Sans', sans-serif;left:520.5px;width:600px;text-align:center;">312</div>
<div class="t" style="top:622.77px;font-size:10.2px;font-weight:400;color:#7a7f86;font-family:'Liberation Sans', sans-serif;left:520.5px;width:600px;text-align:center;">Lifespans extended</div>
<div class="r" style="left:584px;top:653px;width:313px;height:1px;background:#e5e7ea;"></div>
<div class="t" style="top:663.37px;font-size:9.2px;font-weight:700;color:#7a7f86;font-family:'Liberation Sans', sans-serif;letter-spacing:0.15px;left:584px;">EQUIVALENT TO</div>
<div class="r" style="left:941px;top:152.6px;width:35px;height:40px;background:#f3f4f6;border-radius:5px;"></div>
<div class="t" style="top:157.28px;font-size:14.5px;font-weight:700;color:#1a1d21;font-family:'Liberation Sans', sans-serif;left:658.5px;width:600px;text-align:center;">3</div>
<div class="t" style="top:175.88px;font-size:9.3px;font-weight:400;color:#8b9096;font-family:'Liberation Sans', sans-serif;left:658.5px;width:600px;text-align:center;">Mar</div>
<div class="t" style="top:154.17px;font-size:12.3px;font-weight:400;color:#1f2328;font-family:'Liberation Sans', sans-serif;left:986.5px;">HQ Building A, Floor 3</div>
<div class="t" style="top:172.87px;font-size:10px;font-weight:400;color:#34383e;font-family:'Liberation Mono', monospace;letter-spacing:-0.7px;left:986.5px;">RTN-1048</div>
<div class="t" style="top:173.05px;font-size:10px;font-weight:400;color:#c0c3c8;font-family:'Liberation Sans', sans-serif;left:1034px;">&middot;</div>
<div class="t" style="top:172.49px;font-size:11.5px;font-weight:400;color:#8b9096;font-family:'Liberation Sans', sans-serif;left:1041.6px;">24 devices</div>
<div class="r" style="left:941px;top:198.89999999999998px;width:313px;height:1px;background:#e5e7ea;"></div>
<div class="r" style="left:941px;top:206.6px;width:35px;height:40px;background:#f3f4f6;border-radius:5px;"></div>
<div class="t" style="top:211.28px;font-size:14.5px;font-weight:700;color:#1a1d21;font-family:'Liberation Sans', sans-serif;left:658.5px;width:600px;text-align:center;">5</div>
<div class="t" style="top:229.88px;font-size:9.3px;font-weight:400;color:#8b9096;font-family:'Liberation Sans', sans-serif;left:658.5px;width:600px;text-align:center;">Mar</div>
<div class="t" style="top:208.17px;font-size:12.3px;font-weight:400;color:#1f2328;font-family:'Liberation Sans', sans-serif;left:986.5px;">Oslo Office</div>
<div class="t" style="top:226.87px;font-size:10px;font-weight:400;color:#34383e;font-family:'Liberation Mono', monospace;letter-spacing:-0.7px;left:986.5px;">RTN-1051</div>
<div class="t" style="top:227.05px;font-size:10px;font-weight:400;color:#c0c3c8;font-family:'Liberation Sans', sans-serif;left:1034px;">&middot;</div>
<div class="t" style="top:226.49px;font-size:11.5px;font-weight:400;color:#8b9096;font-family:'Liberation Sans', sans-serif;left:1041.6px;">18 devices</div>
<div class="r" style="left:941px;top:252.89999999999998px;width:313px;height:1px;background:#e5e7ea;"></div>
<div class="r" style="left:941px;top:260.6px;width:35px;height:40px;background:#f3f4f6;border-radius:5px;"></div>
<div class="t" style="top:265.28px;font-size:14.5px;font-weight:700;color:#1a1d21;font-family:'Liberation Sans', sans-serif;left:658.5px;width:600px;text-align:center;">10</div>
<div class="t" style="top:283.88px;font-size:9.3px;font-weight:400;color:#8b9096;font-family:'Liberation Sans', sans-serif;left:658.5px;width:600px;text-align:center;">Mar</div>
<div class="t" style="top:262.17px;font-size:12.3px;font-weight:400;color:#1f2328;font-family:'Liberation Sans', sans-serif;left:986.5px;">HQ Building B, IT Room</div>
<div class="t" style="top:280.87px;font-size:10px;font-weight:400;color:#34383e;font-family:'Liberation Mono', monospace;letter-spacing:-0.7px;left:986.5px;">RTN-1053</div>
<div class="t" style="top:281.05px;font-size:10px;font-weight:400;color:#c0c3c8;font-family:'Liberation Sans', sans-serif;left:1034px;">&middot;</div>
<div class="t" style="top:280.49px;font-size:11.5px;font-weight:400;color:#8b9096;font-family:'Liberation Sans', sans-serif;left:1041.6px;">30 devices</div>
<div class="r" style="left:941px;top:306.90000000000003px;width:313px;height:1px;background:#e5e7ea;"></div>
<div class="r" style="left:941px;top:314.6px;width:35px;height:40px;background:#f3f4f6;border-radius:5px;"></div>
<div class="t" style="top:319.28px;font-size:14.5px;font-weight:700;color:#1a1d21;font-family:'Liberation Sans', sans-serif;left:658.5px;width:600px;text-align:center;">14</div>
<div class="t" style="top:337.88px;font-size:9.3px;font-weight:400;color:#8b9096;font-family:'Liberation Sans', sans-serif;left:658.5px;width:600px;text-align:center;">Mar</div>
<div class="t" style="top:316.17px;font-size:12.3px;font-weight:400;color:#1f2328;font-family:'Liberation Sans', sans-serif;left:986.5px;">Stockholm Office</div>
<div class="t" style="top:334.87px;font-size:10px;font-weight:400;color:#34383e;font-family:'Liberation Mono', monospace;letter-spacing:-0.7px;left:986.5px;">RTN-1055</div>
<div class="t" style="top:335.05px;font-size:10px;font-weight:400;color:#c0c3c8;font-family:'Liberation Sans', sans-serif;left:1034px;">&middot;</div>
<div class="t" style="top:334.49px;font-size:11.5px;font-weight:400;color:#8b9096;font-family:'Liberation Sans', sans-serif;left:1041.6px;">42 devices</div>
<div class="t" style="top:437.17px;font-size:12.3px;font-weight:400;color:#4a4f55;font-family:'Liberation Sans', sans-serif;left:941px;">Devices erased</div>
<div class="t" style="top:437.17px;font-size:12.3px;font-weight:700;color:#1f2328;font-family:'Liberation Sans', sans-serif;right:26px;">289 / 312</div>
<div class="r" style="left:941px;top:457.5px;width:313px;height:5px;background:#f1f2f4;border-radius:3px;"></div>
<div class="r" style="left:941px;top:457.5px;width:291.20000000000005px;height:5px;background:#7b8a99;border-radius:3px;"></div>
<div class="t" style="top:473.37px;font-size:12.3px;font-weight:400;color:#4a4f55;font-family:'Liberation Sans', sans-serif;left:941px;">Certificates issued</div>
<div class="t" style="top:473.37px;font-size:12.3px;font-weight:700;color:#1f2328;font-family:'Liberation Sans', sans-serif;right:26px;">18 / 19</div>
<div class="r" style="left:941px;top:493.7px;width:313px;height:5px;background:#f1f2f4;border-radius:3px;"></div>
<div class="r" style="left:941px;top:493.7px;width:298.0999999999999px;height:5px;background:#5aab9b;border-radius:3px;"></div>
<div class="t" style="top:508.17px;font-size:12.3px;font-weight:400;color:#4a4f55;font-family:'Liberation Sans', sans-serif;left:941px;">Audit reports</div>
<div class="t" style="top:508.17px;font-size:12.3px;font-weight:700;color:#1f2328;font-family:'Liberation Sans', sans-serif;right:26px;">4 / 4</div>
<div class="r" style="left:941px;top:528.5px;width:313px;height:5px;background:#f1f2f4;border-radius:3px;"></div>
<div class="r" style="left:941px;top:528.5px;width:313px;height:5px;background:#6aa3c8;border-radius:3px;"></div>
<div class="t" style="top:610.11px;font-size:12.7px;font-weight:400;color:#25292e;font-family:'Liberation Sans', sans-serif;left:941px;">Offboarding</div>
<div class="t" style="top:627.67px;font-size:10.2px;font-weight:400;color:#8b9096;font-family:'Liberation Sans', sans-serif;left:941px;">5 day SLA &middot; 3.8d avg</div>
<div class="t" style="top:617.34px;font-size:12px;font-weight:700;color:#3b7a4c;font-family:'Liberation Sans', sans-serif;right:26px;">19/19 met</div>
<div class="t" style="top:650.61px;font-size:12.7px;font-weight:400;color:#25292e;font-family:'Liberation Sans', sans-serif;left:941px;">Swap</div>
<div class="t" style="top:670.57px;font-size:10.2px;font-weight:400;color:#8b9096;font-family:'Liberation Sans', sans-serif;left:941px;">2 day SLA &middot; 2.1d avg</div>
<div class="t" style="top:658.64px;font-size:12px;font-weight:700;color:#3b7a4c;font-family:'Liberation Sans', sans-serif;right:26px;">8/8 met</div>
</body></html>
